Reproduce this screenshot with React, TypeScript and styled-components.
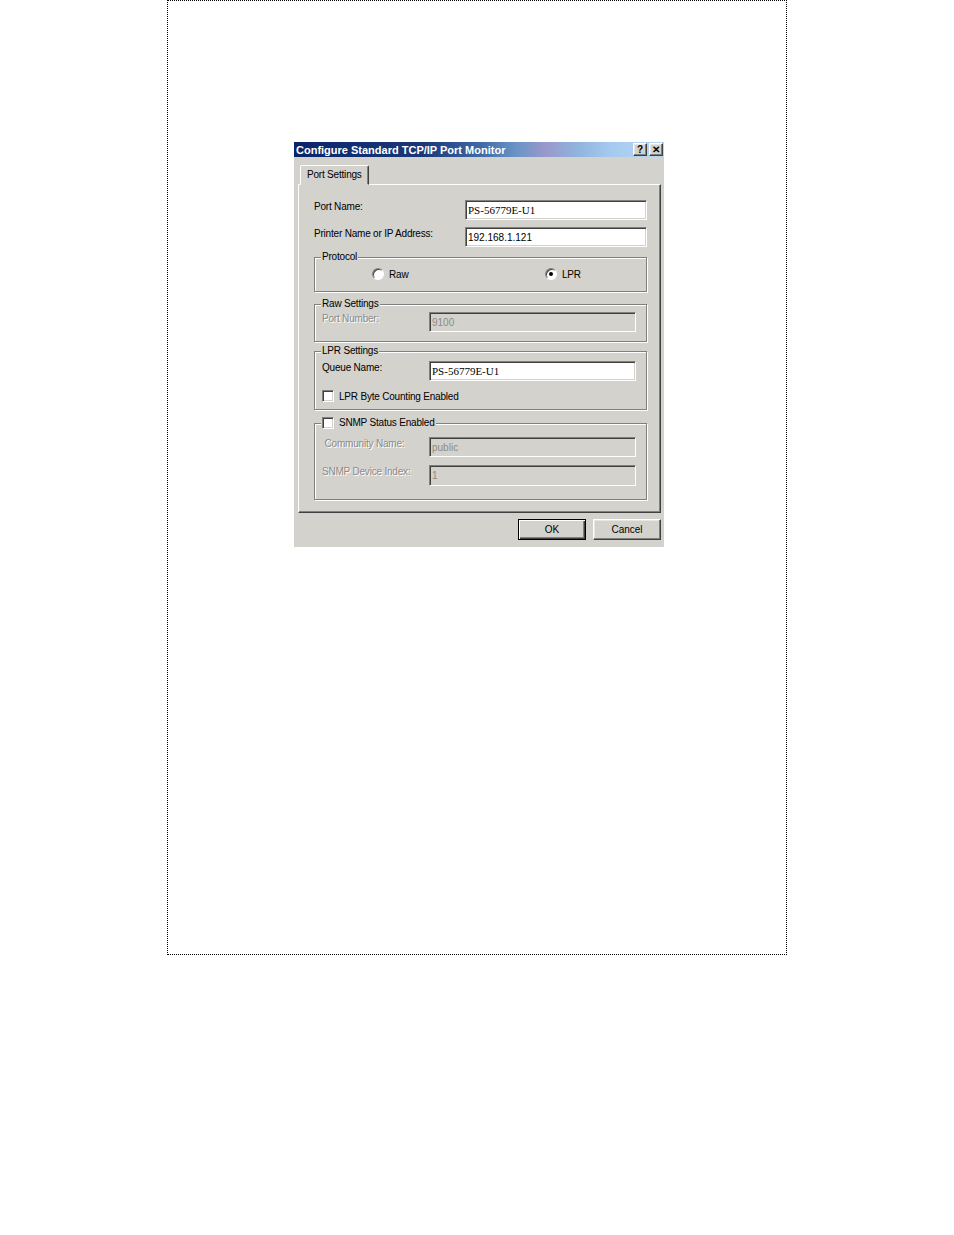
import React from 'react'
import styled, { createGlobalStyle, css } from 'styled-components'

const Global = createGlobalStyle`
  body {
    margin: 0;
    background: #fff;
    font-family: 'Liberation Sans', Arial, sans-serif;
  }
`

const face = '#d4d2cd'

const Frame = styled.div`
  box-sizing: border-box;
  margin-left: 167px;
  width: 620px;
  height: 955px;
  border: 1px dotted #000;
  padding: 141px 0 0 126px;
`

const Dialog = styled.div`
  width: 370px;
  height: 405px;
  background: ${face};
  display: flex;
  flex-direction: column;
  font-size: 10px;
  letter-spacing: -0.2px;
  color: #000;
`

const TitleBar = styled.div`
  height: 15px;
  display: flex;
  align-items: center;
  padding: 0 1px 0 2px;
  background: linear-gradient(90deg, #0a246a 0%, #1a3878 35%, #3d68a6 50%, #6a94c6 60%, #9a98cc 68%, #8fb2dc 76%, #a6caf0 86%, #b8d6f2 100%);
`

const Title = styled.span`
  flex: 1;
  color: #fff;
  font-weight: bold;
  font-size: 11px;
  letter-spacing: 0;
  white-space: nowrap;
`

const raised = css`
  border: 1px solid;
  border-color: #fff #404040 #404040 #fff;
  box-shadow: inset -1px -1px 0 #808080, inset 1px 1px 0 #e8e6e2;
`

const sunken = css`
  border: 1px solid;
  border-color: #808080 #fff #fff #808080;
  box-shadow: inset 1px 1px 0 #404040, inset -1px -1px 0 ${face};
`

const CaptionButton = styled.button`
  box-sizing: border-box;
  width: 14px;
  height: 13px;
  margin-left: 2px;
  padding: 0;
  background: ${face};
  ${raised};
  font: bold 10px 'Liberation Sans', Arial, sans-serif;
  line-height: 10px;
  color: #000;
`

const Body = styled.div`
  padding: 8px 3px 0 4px;
  display: flex;
  flex-direction: column;
`

const TabStrip = styled.div`
  display: flex;
  padding-left: 2px;
  position: relative;
  z-index: 1;
`

const Tab = styled.div`
  box-sizing: border-box;
  height: 20px;
  padding: 3px 6px 0 6px;
  background: ${face};
  border: 1px solid;
  border-color: #fff #404040 transparent #fff;
  border-radius: 2px 2px 0 0;
  box-shadow: inset -1px 0 0 #808080;
  margin-bottom: -1px;
`

const Panel = styled.div`
  box-sizing: border-box;
  width: 363px;
  height: 329px;
  border: 1px solid;
  border-color: #fff #404040 #404040 #fff;
  box-shadow: inset -1px -1px 0 #808080;
  padding: 15px 13px 0 15px;
  display: flex;
  flex-direction: column;
`

const Row = styled.div<{ $gap?: number; $labelWidth: number }>`
  display: grid;
  grid-template-columns: ${(p) => p.$labelWidth}px 1fr;
  align-items: start;
  margin-top: ${(p) => p.$gap ?? 0}px;
`

const Label = styled.span<{ $disabled?: boolean }>`
  padding-top: 1px;
  white-space: nowrap;
  ${(p) =>
    p.$disabled &&
    css`
      color: #8d8b88;
      text-shadow: 1px 1px 0 #fff;
    `}
`

const Field = styled.div<{ $disabled?: boolean; $serif?: boolean; $h?: number }>`
  box-sizing: border-box;
  height: ${(p) => p.$h ?? 20}px;
  ${sunken};
  background: ${(p) => (p.$disabled ? face : '#fff')};
  color: ${(p) => (p.$disabled ? '#8d8b88' : '#000')};
  padding: 3px 0 0 2px;
  font-family: ${(p) => (p.$serif ? "'Liberation Serif', 'Times New Roman', serif" : "'Liberation Sans', Arial, sans-serif")};
  font-size: ${(p) => (p.$serif ? 11 : 10)}px;
  letter-spacing: 0;
  line-height: 13px;
  white-space: nowrap;
`

const Group = styled.fieldset<{ $gap: number; $h: number }>`
  box-sizing: border-box;
  margin: ${(p) => p.$gap}px 0 0 0;
  height: ${(p) => p.$h}px;
  padding: 0 10px 0 7px;
  border: 1px solid #808080;
  box-shadow: 1px 1px 0 #fff, inset 1px 1px 0 #fff;
  min-width: 0;
`

const Legend = styled.legend`
  padding: 0 1px;
  margin-left: -1px;
  background: ${face};
  line-height: 12px;
  display: flex;
  align-items: center;
  gap: 5px;
`

const RadioLine = styled.div`
  display: grid;
  grid-template-columns: 173px 1fr;
  padding: 5px 0 0 50px;
`

const Option = styled.label`
  display: flex;
  align-items: center;
  gap: 5px;
  height: 12px;
`

const Radio = styled.span<{ $checked?: boolean }>`
  box-sizing: border-box;
  width: 12px;
  height: 12px;
  border-radius: 50%;
  background: #fff;
  border: 1px solid;
  border-color: #808080 #fff #fff #808080;
  box-shadow: inset 1px 1px 0 #404040;
  display: flex;
  align-items: center;
  justify-content: center;
  &::after {
    content: '';
    width: 4px;
    height: 4px;
    border-radius: 50%;
    background: #000;
    display: ${(p) => (p.$checked ? 'block' : 'none')};
  }
`

const Check = styled.span`
  box-sizing: border-box;
  width: 12px;
  height: 12px;
  background: #fff;
  ${sunken};
`

const CheckLine = styled.div`
  display: flex;
  align-items: center;
  gap: 5px;
  margin-top: 9px;
`

const Footer = styled.div`
  display: flex;
  justify-content: flex-end;
  gap: 7px;
  padding-top: 6px;
`

const Button = styled.button<{ $default?: boolean }>`
  box-sizing: border-box;
  width: 68px;
  height: 21px;
  padding: 0;
  background: ${face};
  font: 10px 'Liberation Sans', Arial, sans-serif;
  color: #000;
  ${(p) =>
    p.$default
      ? css`
          border: 1px solid #000;
          box-shadow: inset 1px 1px 0 #fff, inset -1px -1px 0 #404040, inset -2px -2px 0 #808080;
        `
      : raised}
`

export default function App() {
  return (
    <>
      <Global />
      <Frame>
        <Dialog>
          <TitleBar>
            <Title>Configure Standard TCP/IP Port Monitor</Title>
            <CaptionButton>?</CaptionButton>
            <CaptionButton>✕</CaptionButton>
          </TitleBar>
          <Body>
            <TabStrip>
              <Tab>Port Settings</Tab>
            </TabStrip>
            <Panel>
              <Row $labelWidth={151}>
                <Label>Port Name:</Label>
                <Field $serif>PS-56779E-U1</Field>
              </Row>
              <Row $labelWidth={151} $gap={7}>
                <Label>Printer Name or IP Address:</Label>
                <Field>192.168.1.121</Field>
              </Row>

              <Group $gap={4} $h={41}>
                <Legend>Protocol</Legend>
                <RadioLine>
                  <Option>
                    <Radio />
                    Raw
                  </Option>
                  <Option>
                    <Radio $checked />
                    LPR
                  </Option>
                </RadioLine>
              </Group>

              <Group $gap={6} $h={44}>
                <Legend>Raw Settings</Legend>
                <Row $labelWidth={107} $gap={2}>
                  <Label $disabled>Port Number:</Label>
                  <Field $disabled>9100</Field>
                </Row>
              </Group>

              <Group $gap={3} $h={65}>
                <Legend>LPR Settings</Legend>
                <Row $labelWidth={107} $gap={4}>
                  <Label>Queue Name:</Label>
                  <Field $serif>PS-56779E-U1</Field>
                </Row>
                <CheckLine>
                  <Check />
                  LPR Byte Counting Enabled
                </CheckLine>
              </Group>

              <Group $gap={7} $h={83}>
                <Legend>
                  <Check />
                  SNMP Status Enabled
                </Legend>
                <Row $labelWidth={107} $gap={8}>
                  <Label $disabled>&nbsp;Community Name:</Label>
                  <Field $disabled>public</Field>
                </Row>
                <Row $labelWidth={107} $gap={8}>
                  <Label $disabled>SNMP Device Index:</Label>
                  <Field $disabled $h={21}>1</Field>
                </Row>
              </Group>
            </Panel>
            <Footer>
              <Button $default>OK</Button>
              <Button>Cancel</Button>
            </Footer>
          </Body>
        </Dialog>
      </Frame>
    </>
  )
}
